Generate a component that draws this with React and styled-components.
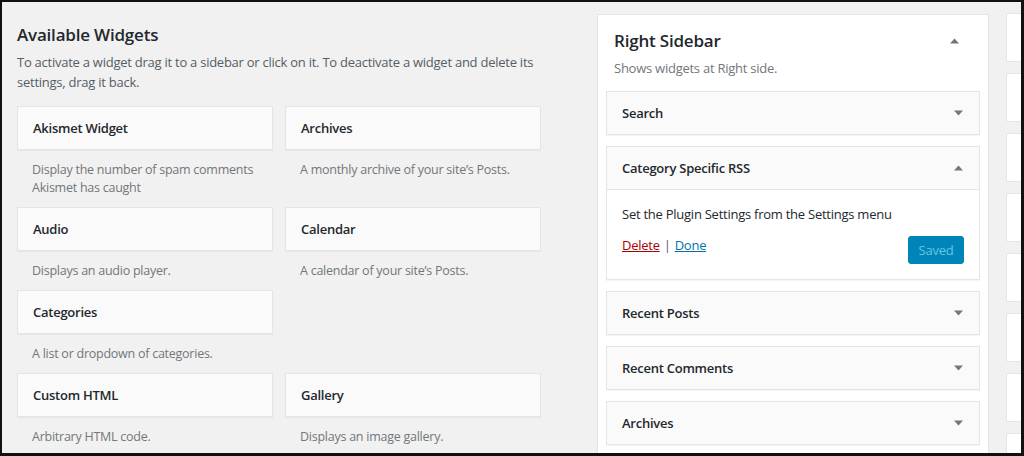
import React from "react";
import styled, { createGlobalStyle } from "styled-components";

const Global = createGlobalStyle`
  html, body { margin: 0; padding: 0; }
  body {
    font-family: "Open Sans", "Noto Sans", "Liberation Sans", sans-serif;
    font-size: 13px;
    color: #23282d;
    background: #f1f1f1;
  }
  * { box-sizing: border-box; }
`;

const Frame = styled.div`
  width: 1024px;
  height: 456px;
  overflow: hidden;
  background: #f1f1f1;
  border-style: solid;
  border-color: #111;
  border-width: 2px 3px 3px 2px;
  display: flex;
  align-items: flex-start;
  padding-left: 15px;
  letter-spacing: -0.25px;
`;

const LeftColumn = styled.section`
  width: 540px;
  flex: none;
`;

const Heading = styled.h2`
  margin: 21px 0 0;
  font-size: 17px;
  line-height: 24px;
  font-weight: 600;
  color: #23282d;
  letter-spacing: -0.2px;
`;

const Intro = styled.p`
  margin: 6px 0 0;
  font-size: 13px;
  line-height: 19.5px;
  color: #555d66;
  width: 535px;
`;

const WidgetGrid = styled.div`
  margin-top: 14px;
  width: 524px;
  display: grid;
  grid-template-columns: 256px 256px;
  column-gap: 12px;
  align-items: start;
`;

const WidgetItem = styled.div`
  display: flex;
  flex-direction: column;
`;

const WidgetCard = styled.div`
  height: 44px;
  background: #fafafa;
  border: 1px solid #e5e5e5;
  box-shadow: 0 1px 1px rgba(0, 0, 0, 0.04);
  display: flex;
  align-items: center;
  padding: 0 15px;
  font-weight: 600;
  font-size: 13px;
  color: #23282d;
`;

const WidgetDesc = styled.div`
  padding: 11px 15px 10px;
  line-height: 18px;
  font-size: 12.5px;
  color: #72777c;
`;

const SidebarPanel = styled.section`
  margin-top: 12px;
  margin-left: 40px;
  width: 392px;
  flex: none;
  height: 460px;
  background: #fff;
  border: 1px solid #e5e5e5;
  box-shadow: 0 1px 1px rgba(0, 0, 0, 0.04);
  padding: 0 8px;
`;

const PanelHeader = styled.div`
  display: flex;
  align-items: center;
  justify-content: space-between;
  padding: 14px 21px 0 8px;
`;

const PanelTitle = styled.h2`
  margin: 0;
  font-size: 17px;
  line-height: 24px;
  font-weight: 600;
  color: #23282d;
  letter-spacing: -0.2px;
`;

const PanelDesc = styled.p`
  margin: 6px 0 0 8px;
  font-size: 13px;
  line-height: 19px;
  color: #72777c;
`;

const SidebarList = styled.div`
  margin-top: 13px;
  display: flex;
  flex-direction: column;
  gap: 11px;
`;

const SidebarWidget = styled.div`
  border: 1px solid #e5e5e5;
  box-shadow: 0 1px 1px rgba(0, 0, 0, 0.04);
  background: #fff;
`;

const SidebarWidgetTop = styled.div`
  height: ${(p) => (p.$open ? "43px" : "42px")};
  background: #fafafa;
  display: flex;
  align-items: center;
  justify-content: space-between;
  padding: 0 16px 0 15px;
  font-weight: 600;
  font-size: 13px;
  color: #23282d;
  border-bottom: ${(p) => (p.$open ? "1px solid #e5e5e5" : "none")};
`;

const SidebarWidgetBody = styled.div`
  padding: 15px 15px 15px;
  background: #fff;
`;

const BodyText = styled.p`
  margin: 0;
  line-height: 19px;
  font-size: 13px;
  color: #23282d;
`;

const ActionsRow = styled.div`
  margin-top: 12px;
  display: flex;
  justify-content: space-between;
  align-items: flex-start;
`;

const Links = styled.div`
  line-height: 19px;
  color: #72777c;
  font-size: 13px;
`;

const Link = styled.a`
  color: ${(p) => (p.$danger ? "#a00" : "#0073aa")};
  text-decoration: underline;
  cursor: pointer;
`;

const Sep = styled.span`
  color: #555d66;
  margin: 0 4px;
`;

const SavedButton = styled.button`
  width: 56px;
  height: 28px;
  border: 1px solid #0083b8;
  border-radius: 3px;
  background: #0085ba;
  color: #66c6e4;
  font-family: inherit;
  font-size: 13px;
  letter-spacing: -0.25px;
  padding: 0;
  cursor: default;
`;

const Rail = styled.div`
  margin-left: 17px;
  margin-top: 11px;
  width: 30px;
  flex: none;
  display: flex;
  flex-direction: column;
  gap: 11px;
`;

const RailBox = styled.div`
  height: 49px;
  background: #fff;
  border: 1px solid #e5e5e5;
`;

const ArrowSvg = styled.svg`
  display: block;
  flex: none;
`;

const Arrow = ({ up }) => (
  <ArrowSvg width="9" height="6" viewBox="0 0 9 6">
    {up ? (
      <polygon points="0,5.5 4.5,0.5 9,5.5" fill="#72777c" />
    ) : (
      <polygon points="0,0.5 4.5,5.5 9,0.5" fill="#72777c" />
    )}
  </ArrowSvg>
);

const widgets = [
  ["Akismet Widget", "Display the number of spam comments Akismet has caught"],
  ["Archives", "A monthly archive of your site\u2019s Posts."],
  ["Audio", "Displays an audio player."],
  ["Calendar", "A calendar of your site\u2019s Posts."],
  ["Categories", "A list or dropdown of categories."],
  null,
  ["Custom HTML", "Arbitrary HTML code."],
  ["Gallery", "Displays an image gallery."],
];

const sidebarWidgets = ["Recent Posts", "Recent Comments", "Archives"];

export default function App() {
  return (
    <>
      <Global />
      <Frame>
        <LeftColumn>
          <Heading>Available Widgets</Heading>
          <Intro>
            To activate a widget drag it to a sidebar or click on it. To deactivate a widget and delete its
            settings, drag it back.
          </Intro>
          <WidgetGrid>
            {widgets.map((w, i) =>
              w ? (
                <WidgetItem key={i}>
                  <WidgetCard>{w[0]}</WidgetCard>
                  <WidgetDesc>{w[1]}</WidgetDesc>
                </WidgetItem>
              ) : (
                <WidgetItem key={i} />
              )
            )}
          </WidgetGrid>
        </LeftColumn>

        <SidebarPanel>
          <PanelHeader>
            <PanelTitle>Right Sidebar</PanelTitle>
            <Arrow up />
          </PanelHeader>
          <PanelDesc>Shows widgets at Right side.</PanelDesc>
          <SidebarList>
            <SidebarWidget>
              <SidebarWidgetTop>
                Search
                <Arrow />
              </SidebarWidgetTop>
            </SidebarWidget>
            <SidebarWidget>
              <SidebarWidgetTop $open>
                Category Specific RSS
                <Arrow up />
              </SidebarWidgetTop>
              <SidebarWidgetBody>
                <BodyText>Set the Plugin Settings from the Settings menu</BodyText>
                <ActionsRow>
                  <Links>
                    <Link $danger>Delete</Link>
                    <Sep>|</Sep>
                    <Link>Done</Link>
                  </Links>
                  <SavedButton>Saved</SavedButton>
                </ActionsRow>
              </SidebarWidgetBody>
            </SidebarWidget>
            {sidebarWidgets.map((t) => (
              <SidebarWidget key={t}>
                <SidebarWidgetTop>
                  {t}
                  <Arrow />
                </SidebarWidgetTop>
              </SidebarWidget>
            ))}
          </SidebarList>
        </SidebarPanel>

        <Rail>
          {Array.from({ length: 8 }).map((_, i) => (
            <RailBox key={i} />
          ))}
        </Rail>
      </Frame>
    </>
  );
}
